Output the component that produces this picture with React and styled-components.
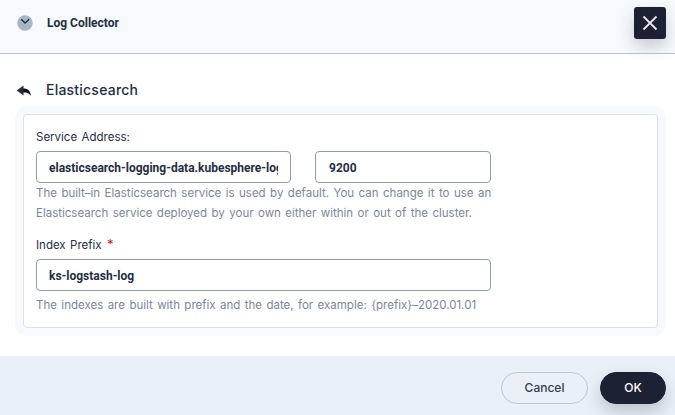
import React from "react";
import styled, { createGlobalStyle } from "styled-components";

const GlobalStyle = createGlobalStyle`
  * { box-sizing: border-box; }
  body { margin: 0; background: #fff; }
`;

const Modal = styled.div`
  display: flex;
  flex-direction: column;
  width: 675px;
  height: 415px;
  overflow: hidden;
  background: #fff;
  color: #242e42;
  font-family: Inter, "Noto Sans", sans-serif;
  font-size: 11.5px;
  line-height: 20px;
  word-spacing: 1.2px;
`;

const Header = styled.header`
  display: flex;
  align-items: flex-start;
  height: 54px;
  flex: none;
  padding: 7px 9px 0 17px;
  background: #f6fafd;
  border-bottom: 1px solid #b9c6d1;
`;

const HeaderIcon = styled.svg`
  width: 16px;
  height: 16px;
  margin: 8px 14px 0 0;
`;

const Title = styled.h1`
  flex: 1;
  margin: 6px 0 0;
  font: 700 12px/20px Roboto, sans-serif;
  word-spacing: 0;
`;

const CloseButton = styled.button`
  display: flex;
  align-items: center;
  justify-content: center;
  width: 32px;
  height: 32px;
  padding: 0;
  border: 0;
  border-radius: 3px;
  background: #1c2233;
  box-shadow: 0 8px 16px rgba(35, 45, 65, 0.22);
`;

const Body = styled.main`
  flex: 1;
  padding: 24px 9px 0 15px;
`;

const SubHeader = styled.div`
  display: flex;
  align-items: center;
  height: 24px;
  margin-bottom: 4px;
`;

const BackIcon = styled.svg`
  width: 16px;
  height: 14px;
  margin: 1px 14px 0 1px;
`;

const SubTitle = styled.h2`
  margin: 0;
  font: 500 14px/24px Inter, sans-serif;
  letter-spacing: 0.22px;
`;

const Panel = styled.section`
  height: 230px;
  padding: 8px;
  border-radius: 12px;
  background: #f6fafd;
`;

const Form = styled.form`
  height: 214px;
  padding: 12px;
  border: 1px solid #d8e1e9;
  border-radius: 4px;
  background: #fff;
`;

const Field = styled.div`
  width: 455px;
  margin-bottom: ${(p) => p.$gap || "0"};
`;

const Label = styled.label`
  display: block;
  height: 20px;
  margin-bottom: 4px;
`;

const Required = styled.span`
  margin-left: 1px;
  color: #ca2621;
  font-size: 13px;
  line-height: 1;
`;

const Inputs = styled.div`
  display: grid;
  grid-template-columns: ${(p) => p.$columns || "1fr"};
  gap: 24px;
`;

const Input = styled.input`
  width: 100%;
  min-width: 0;
  height: 32px;
  padding: 1px 12px 0 ${(p) => p.$inset || "12px"};
  border: 1px solid #8f9dac;
  border-radius: 4px;
  outline: 0;
  background: #fff;
  color: #242e42;
  font: 700 12px/20px Roboto, sans-serif;
`;

const Help = styled.p`
  margin: ${(p) => p.$top || "0"} 0 0;
  color: #79879c;
`;

const HelpLine = styled.span`
  display: block;
  white-space: nowrap;
  letter-spacing: ${(p) => p.$spacing || "0"};
`;

const Footer = styled.footer`
  display: flex;
  justify-content: flex-end;
  gap: 12px;
  height: 59px;
  flex: none;
  padding: 16px 9px 0;
  background: #e9f0f8;
`;

const Button = styled.button`
  width: ${(p) => (p.$primary ? "66px" : "87px")};
  height: 32px;
  padding: 0;
  border: 1px solid ${(p) => (p.$primary ? "#1c2233" : "#bec9d6")};
  border-radius: 16px;
  background: ${(p) => (p.$primary ? "#1c2233" : "transparent")};
  box-shadow: ${(p) => (p.$primary ? "0 8px 16px rgba(35, 45, 65, 0.22)" : "none")};
  color: ${(p) => (p.$primary ? "#fff" : "#343e52")};
  font: 500 12px/20px Inter, sans-serif;
`;

export default function App() {
  return (
    <Modal>
      <GlobalStyle />
      <Header>
        <HeaderIcon viewBox="0 0 16 16">
          <circle cx="8" cy="8" r="7.7" fill="#a8b6c3" />
          <path d="M4.300 4.300 8 8l4.200-3.700" fill="none" stroke="#242e42" strokeWidth="1.4" />
        </HeaderIcon>
        <Title>Log Collector</Title>
        <CloseButton aria-label="Close">
          <svg width="32" height="32" viewBox="0 0 32 32" fill="none" stroke="#e6e9ed" strokeWidth="1.8">
            <path d="m9.5 9.5 13 13m0-13-13 13" />
          </svg>
        </CloseButton>
      </Header>
      <Body>
        <SubHeader>
          <BackIcon viewBox="0 0 16 14">
            <path d="M7 4.500C12 4.500 14.800 7 14.800 12 13 9 11 8.500 7 8.500Z" fill="#080a0e" />
            <path d="M.8 6.500 7.500 1.500v10Z" fill="#242e42" />
          </BackIcon>
          <SubTitle>Elasticsearch</SubTitle>
        </SubHeader>
        <Panel>
          <Form>
            <Field $gap="12px">
              <Label htmlFor="address">Service Address:</Label>
              <Inputs $columns="255px 176px">
                <Input id="address" readOnly value="elasticsearch-logging-data.kubesphere-logging-system.svc" />
                <Input aria-label="Port" $inset="13px" readOnly value="9200" />
              </Inputs>
              <Help>
                <HelpLine $spacing="0.01px">The built–in Elasticsearch service is used by default. You can change it to use an</HelpLine>
                <HelpLine>Elasticsearch service deployed by your own either within or out of the cluster.</HelpLine>
              </Help>
            </Field>
            <Field>
              <Label htmlFor="prefix">Index Prefix <Required>*</Required></Label>
              <Inputs>
                <Input id="prefix" readOnly value="ks-logstash-log" />
              </Inputs>
              <Help $top="4px">
                <HelpLine>The indexes are built with prefix and the date, for example: {"{prefix}"}–2020.01.01</HelpLine>
              </Help>
            </Field>
          </Form>
        </Panel>
      </Body>
      <Footer>
        <Button type="button">Cancel</Button>
        <Button type="button" $primary>OK</Button>
      </Footer>
    </Modal>
  );
}
